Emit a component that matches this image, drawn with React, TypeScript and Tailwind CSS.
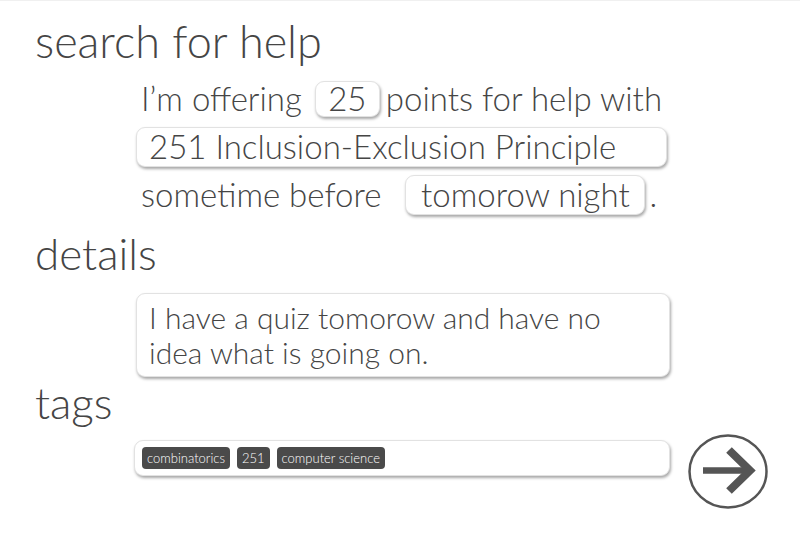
import React from 'react';

const font = { fontFamily: 'Lato, "Open Sans", sans-serif' };

const Field = ({ children, className = '' }: { children: React.ReactNode; className?: string }) => (
  <div
    className={`bg-white rounded-[9px] border border-[#e2e2e2] shadow-[1px_2px_3px_rgba(0,0,0,0.35)] ${className}`}>
    {children}
  </div>
);

const Tag = ({ label }: { label: string }) => (
  <span className="h-[22px] px-[5px] flex items-center rounded-[4px] bg-[#4a4a4a] text-white text-[13px] leading-none">
    {label}
  </span>
);

export default function App() {
  const tags = ['combinatorics', '251', 'computer science'];

  return (
    <div className="w-[800px] h-[534px] bg-white text-[#454545] font-light border-t border-[#f0f0f0]" style={font}>
      <div className="pl-[35px] pt-[14px]">
        <h1 className="text-[45px] leading-[52px] font-light">search for help</h1>

        <div className="pl-[101px] text-[33px] font-light">
          <div className="flex items-center h-[48px] mt-[8px]">
            <span className="pl-[5px]">I’m offering</span>
            <Field className="ml-[13px] h-[36px] w-[65px] flex items-center justify-center">25</Field>
            <span className="ml-[6px]">points for help with</span>
          </div>
          <div className="flex items-center h-[48px]">
            <Field className="h-[40px] w-[531px] flex items-center pl-[12px]">251 Inclusion-Exclusion Principle</Field>
          </div>
          <div className="flex items-center h-[48px]">
            <span className="pl-[5px]">sometime before</span>
            <Field className="ml-[24px] h-[40px] w-[240px] flex items-center justify-center">tomorow night</Field>
            <span className="ml-[4px]">.</span>
          </div>
        </div>

        <h2 className="text-[44px] leading-[52px] font-light mt-[8px]">details</h2>

        <div className="pl-[101px] mt-[14px]">
          <Field className="w-[534px] h-[84px] px-[12px] pt-[6px] text-[30px] leading-[35px]">
            I have a quiz tomorow and have no idea what is going on.
          </Field>
        </div>

        <h2 className="text-[44px] leading-[52px] font-light mt-[-1px]">tags</h2>

        <div className="flex items-start pl-[99px] mt-[-10px]">
          <Field className="w-[536px] h-[36px] mt-[22px] flex items-center gap-[7px] pl-[7px]">
            {tags.map((t) => (
              <Tag key={t} label={t} />
            ))}
          </Field>
          <button className="ml-[18px] mt-[16px]" aria-label="submit">
            <svg width="80" height="75" viewBox="0 0 80 75">
              <ellipse cx="40" cy="37.5" rx="38.5" ry="36" fill="none" stroke="#555" strokeWidth="2.5" />
              <path d="M15 36.5 H59" stroke="#555" strokeWidth="6.5" />
              <path d="M41 16 L62 36.5 L41 57" fill="none" stroke="#555" strokeWidth="8" strokeLinejoin="miter" />
            </svg>
          </button>
        </div>
      </div>
    </div>
  );
}
